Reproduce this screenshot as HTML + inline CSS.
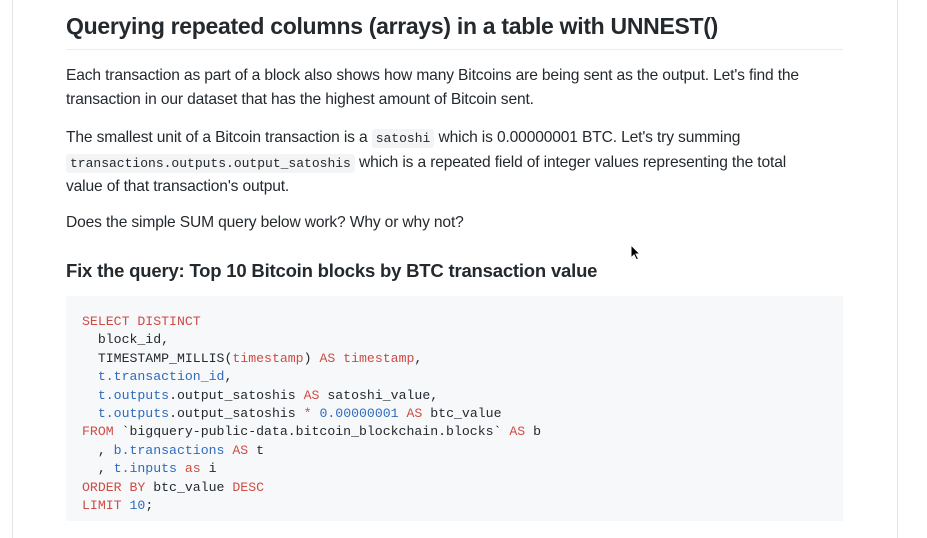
<!DOCTYPE html>
<html><head><meta charset="utf-8"><style>
body{margin:0;width:927px;height:531px;overflow:hidden;background:#fff;font-family:"Liberation Sans",sans-serif;color:#24292e;position:relative}
.frame{position:absolute;left:12px;top:-2px;width:884px;height:540px;border-left:1px solid #e5e5e5;border-right:1px solid #e5e5e5}
h1{position:absolute;left:66px;top:13px;margin:0;font-size:23px;font-weight:bold;letter-spacing:-0.3px;width:777px;padding-bottom:9px;border-bottom:1px solid #eaecef}
p{position:absolute;left:66px;margin:0;font-size:15.6px;line-height:23.5px;width:765px;letter-spacing:-0.15px}
code{font-family:"Liberation Mono",monospace;font-size:13px;background:#f3f4f5;padding:2px 4px;border-radius:3px;letter-spacing:0}
h2{position:absolute;left:66px;top:260px;margin:0;font-size:18.5px;font-weight:bold;letter-spacing:-0.2px}
pre{position:absolute;left:66px;top:296px;width:777px;height:225px;margin:0;background:#f6f8fa;padding:17px 0 0 16px;box-sizing:border-box;font-family:"Liberation Mono",monospace;font-size:13.2px;line-height:18.4px;color:#24292e}
.k{color:#cf4b45}.b{color:#2f6bbd}
</style></head><body>
<div class="frame"></div>
<h1>Querying repeated columns (arrays) in a table with UNNEST()</h1>
<p style="top:64px">Each transaction as part of a block also shows how many Bitcoins are being sent as the output. Let's find the transaction in our dataset that has the highest amount of Bitcoin sent.</p>
<p style="top:126px;width:750px">The smallest unit of a Bitcoin transaction is a <code>satoshi</code> which is 0.00000001 BTC. Let's try summing <code>transactions.outputs.output_satoshis</code> which is a repeated field of integer values representing the total value of that transaction's output.</p>
<p style="top:211px">Does the simple SUM query below work? Why or why not?</p>
<h2>Fix the query: Top 10 Bitcoin blocks by BTC transaction value</h2>
<pre><span class="k">SELECT DISTINCT</span>
  block_id,
  TIMESTAMP_MILLIS(<span class="k">timestamp</span>) <span class="k">AS timestamp</span>,
  <span class="b">t.transaction_id</span>,
  <span class="b">t.outputs</span>.output_satoshis <span class="k">AS</span> satoshi_value,
  <span class="b">t.outputs</span>.output_satoshis <span class="k">*</span> <span class="b">0.00000001</span> <span class="k">AS</span> btc_value
<span class="k">FROM</span> `bigquery-public-data.bitcoin_blockchain.blocks` <span class="k">AS</span> b
  , <span class="b">b.transactions</span> <span class="k">AS</span> t
  , <span class="b">t.inputs</span> <span class="k">as</span> i
<span class="k">ORDER BY</span> btc_value <span class="k">DESC</span>
<span class="k">LIMIT</span> <span class="b">10</span>;</pre>
<svg style="position:absolute;left:630px;top:244px" width="12" height="18" viewBox="0 0 12 18"><path d="M1 1 L1 14 L4 11 L6.5 16 L8.5 15 L6 10 L10 10 Z" fill="#000" stroke="#fff" stroke-width="1"/></svg>
</body></html>
